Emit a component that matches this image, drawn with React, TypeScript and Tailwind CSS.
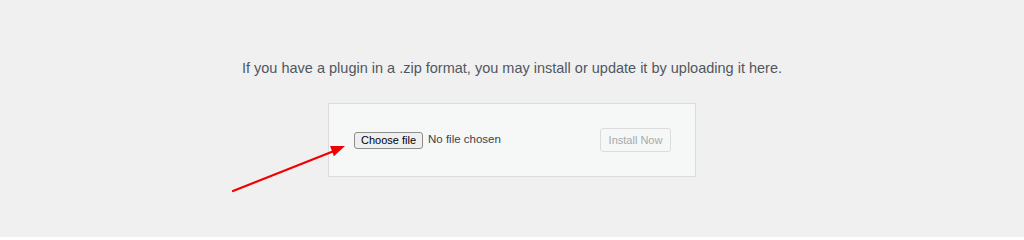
import React from "react";

export default function App() {
  return (
    <div className="relative w-full h-[237px] bg-[#f0f0f1] overflow-hidden" style={{ fontFamily: '"Liberation Sans", Arial, sans-serif' }}>
      <div className="flex flex-col items-center pt-[58px]">
        <p className="text-[14.5px] leading-[20px] text-[#50575e]">
          If you have a plugin in a .zip format, you may install or update it by uploading it here.
        </p>
        <div className="mt-[25px] w-[368px] h-[74px] border border-[#dcdcde] bg-[#f6f7f7] flex items-center justify-between pl-[25px] pr-[24px]">
          <div className="flex items-center gap-[5px]">
            <span className="h-[17px] w-[69px] flex items-center justify-center border border-[#8d8d8d] rounded-[3px] bg-[#efefef] text-[11px] text-black leading-none">
              Choose file
            </span>
            <span className="text-[11.5px] text-[#3c434a]">No file chosen</span>
          </div>
          <span className="h-[24px] w-[71px] flex items-center justify-center border border-[#dcdcde] rounded-[3px] bg-[#f6f7f7] text-[11px] text-[#a7aaad]">
            Install Now
          </span>
        </div>
      </div>
      <svg className="absolute inset-0 pointer-events-none" width="1024" height="237" viewBox="0 0 1024 237">
        <line x1="233" y1="191" x2="334" y2="151" stroke="#f20000" strokeWidth="2.2" strokeLinecap="round" />
        <polygon points="345,146 333.9,156.3 330.1,146.1" fill="#f20000" />
      </svg>
    </div>
  );
}
